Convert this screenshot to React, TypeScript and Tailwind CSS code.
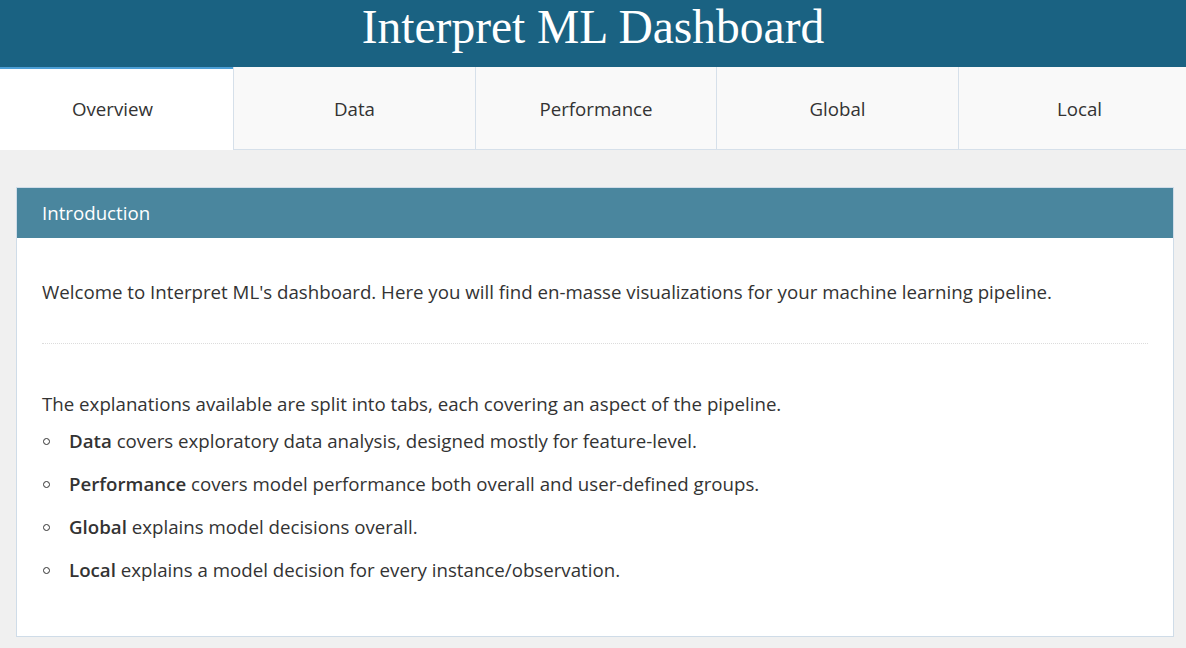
const tabs = ["Overview", "Data", "Performance", "Global", "Local"];

const items = [
  ["Data", "covers exploratory data analysis, designed mostly for feature-level."],
  ["Performance", "covers model performance both overall and user-defined groups."],
  ["Global", "explains model decisions overall."],
  ["Local", "explains a model decision for every instance/observation."],
];

export default function App() {
  return (
    <div className="h-[648px] overflow-hidden bg-[#f0f0f0] font-['Open_Sans',sans-serif] text-[18.7px] text-[#333]">
      <header className="flex h-[67px] items-center justify-center bg-[#1a6282]">
        <h1 className="font-['Liberation_Serif',serif] text-[47.5px] leading-none text-white pb-[11px]">
          Interpret ML Dashboard
        </h1>
      </header>
      <nav className="flex h-[83px] overflow-hidden">
        {tabs.map((t, i) =>
          i === 0 ? (
            <div
              key={t}
              className="flex w-[233px] shrink-0 items-center justify-center border-t-2 border-[#4c9fd6] bg-white pr-[8px]"
            >
              {t}
            </div>
          ) : (
            <div
              key={t}
              className={
                i === 2
                  ? "flex w-[241px] shrink-0 items-center justify-center border-b border-l border-[#d6e0ea] bg-[#f9f9f9] pt-[2px]"
                  : "flex w-[242px] shrink-0 items-center justify-center border-b border-l border-[#d6e0ea] bg-[#f9f9f9] pt-[2px]"
              }
            >
              {t}
            </div>
          )
        )}
      </nav>
      <main className="pl-[16px] pr-[12px] pt-[37px]">
        <section className="h-[450px] border border-[#cfdce8] bg-white">
          <div className="flex h-[50px] items-center bg-[#4a869e] px-[25px] text-white">
            Introduction
          </div>
          <div className="px-[25px] pt-[41px]">
            <p className="leading-[26px]">
              Welcome to Interpret ML's dashboard. Here you will find en-masse visualizations for your
              machine learning pipeline.
            </p>
            <hr className="mt-[38px] border-t border-dotted border-[#dcdcdc]" />
            <p className="mt-[47px] leading-[26px]">
              The explanations available are split into tabs, each covering an aspect of the pipeline.
            </p>
            <ul className="mt-[11px] flex flex-col gap-[17px]">
              {items.map(([b, rest]) => (
                <li key={b} className="flex items-center leading-[26px]">
                  <span className="ml-[1px] mr-[19px] h-[7px] w-[7px] rounded-full border border-[#333]" />
                  <span>
                    <b className="font-semibold">{b}</b> {rest}
                  </span>
                </li>
              ))}
            </ul>
          </div>
        </section>
      </main>
    </div>
  );
}
